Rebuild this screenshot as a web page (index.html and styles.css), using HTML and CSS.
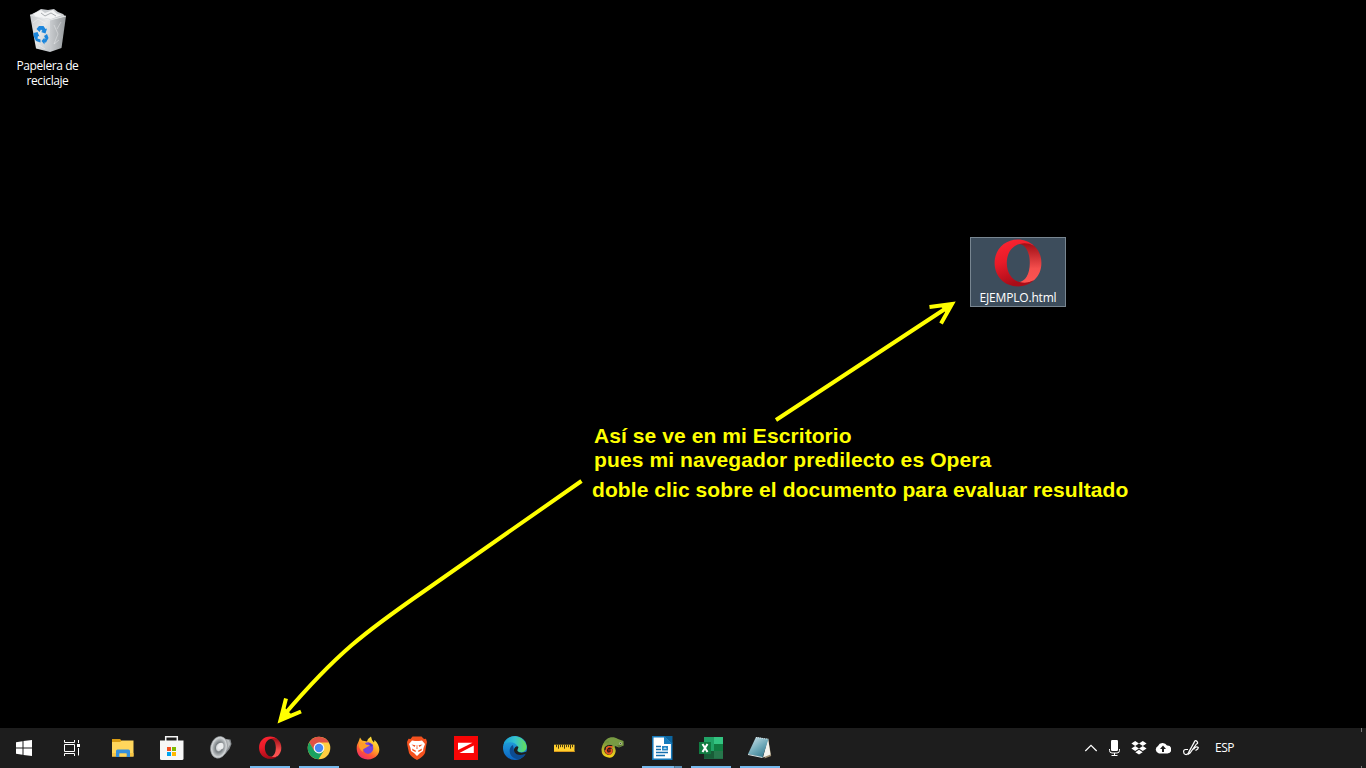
FILE: index.html
```html
<!DOCTYPE html>
<html lang="es">
<head>
<meta charset="utf-8">
<title>Escritorio</title>
<link rel="stylesheet" href="styles.css">
</head>
<body>
<main class="desktop">
  <div class="shortcut recycle">
    <svg class="recycle-icon" viewBox="0 0 48 48">
      <defs>
        <linearGradient id="binL" x1="0" y1="0" x2="1" y2="1"><stop offset="0" stop-color="#c6c9cc"/><stop offset=".5" stop-color="#e6e8e9"/><stop offset="1" stop-color="#bfc3c7"/></linearGradient>
        <linearGradient id="binR" x1="0" y1="0" x2="1" y2="0"><stop offset="0" stop-color="#c9cccf"/><stop offset="1" stop-color="#969a9d"/></linearGradient>
      </defs>
      <path d="M6 10 12 7 17 4 24 5 30 4 34 7 39 9 42 12 25 17Z" fill="#c9cccf"/>
      <path d="M9 9 17 5 21 8 29 5 33 9 38 10 27 14 12 12Z" fill="#f3f4f5"/>
      <path d="M17 8 21 11 27 8 32 11" fill="none" stroke="#a9adb0"/>
      <path d="M6 10 26 15 26 47 12 43.500Z" fill="url(#binL)"/>
      <path d="M26 15 42 11 37.500 43 26 47Z" fill="url(#binR)"/>
      <path d="M6 10 26 15 42 11" fill="none" stroke="#eef0f1" stroke-width=".8"/>
      <path d="M30 20 34 29 30 39 35 35M37 17 33 24M9 18l5-4 7 4M15 40l6 4" fill="none" stroke="#fff" opacity=".35"/>
      <g fill="#1b86dc"><path d="M12.500 24 15 21 19.500 21 21.500 24 23 23.500 21.500 28.500 17 27 18.500 26 17 24.500 15.500 27Z"/><path d="M9.500 28 13.500 27 15.500 31.500 14 31 13.500 33.500 16.500 34.500V37.500L12 36 9.800 31.500Z"/><path d="M20 31 23 29 24.500 33 22 37.500H20.500V39.500L17.500 36 20.500 32.500V34.500L21.500 33.500Z"/></g>
    </svg>
    <span class="label">Papelera de<br>reciclaje</span>
  </div>

  <div class="shortcut example">
    <svg class="opera-large" viewBox="0 0 24 24">
      <defs>
        <linearGradient id="opA" x1="0" y1="0" x2="0.3" y2="1"><stop offset="0" stop-color="#ff2633"/><stop offset=".5" stop-color="#e91b28"/><stop offset="1" stop-color="#a90c18"/></linearGradient>
        <linearGradient id="opB" x1="0" y1="0" x2="0" y2="1"><stop offset="0" stop-color="#990b12"/><stop offset=".25" stop-color="#bd2328"/><stop offset=".65" stop-color="#f64f4d"/><stop offset="1" stop-color="#ff5452"/></linearGradient>
      </defs>
      <path fill="url(#opB)" d="M9 3.500Q12 .8 16 1.300L20 3.400C22.400 5.500 23.700 8.500 23.700 12S22.400 18.500 20 20.600Q14 24 9 20.500 10.500 21.500 12.200 21.500C15.600 21.500 17.900 17.600 17.900 12S15.600 2.500 12.200 2.500Q10.500 2.500 9 3.500Z"/>
      <path fill="url(#opA)" d="M12 .3C5.200.3.300 5.400.300 12S5.200 23.700 12 23.700C15 23.700 17.900 22.500 20 20.600Q16.500 22.500 12.800 21.500C9 20.600 6.400 17 6.400 12S9 3.400 12.800 2.500Q16.500 1.500 20 3.400C17.900 1.500 15 .3 12 .3Z"/>
    </svg>
    <span class="label">EJEMPLO.html</span>
  </div>

  <svg class="arrows" viewBox="0 0 1366 768">
    <path d="M776 420 948 307M929.500 307 952 304 941 323.500"/>
    <path d="M581.500 481 425 590.500C365 632 337 653 284 715M286 698.500 280.500 720 301 711.500"/>
    <path class="tip" d="M955 302 940 305 946 313ZM278 723 291 714 284 707Z"/>
  </svg>

  <p class="note note-a">Así se ve en mi Escritorio</p>
  <p class="note note-b">pues mi navegador predilecto es Opera</p>
  <p class="note note-c">doble clic sobre el documento para evaluar resultado</p>
</main>

<footer class="taskbar">
  <div class="system">
    <svg viewBox="0 0 16 16"><path fill="#fff" d="M0 2.300 6.500 1.300V7.500H0ZM7.500 1.100 16 0V7.500H7.500ZM0 8.500H6.500V14.700L0 13.700ZM7.500 8.500H16V16L7.500 14.900Z"/></svg>
    <svg viewBox="0 0 16 16"><path fill="none" stroke="#fff" d="M.5 0V2.500H10.500V0M.5 4.500H10.500V11.500H.5ZM.5 16V13.500H10.500V16M14.500 0V3M14.500 8V15.500"/><path fill="#fff" d="M13 4h3v3h-3z"/></svg>
  </div>
  <nav class="apps">
    <div class="app"><svg viewBox="0 0 24 24">
      <path fill="#d99c13" d="M1 3H9L11 5V8H1Z"/><path fill="#ffd65c" d="M1 6H9L11 4.500H22.500V20.500H1Z"/><path fill="#f7c545" d="M1 17h21.500v3.500H1Z"/>
      <path fill="#3590dc" d="M5 21V15Q5 13.500 6.500 13.500H17.500Q19 13.500 19 15V21H15.500V17.500H8.500V21Z"/><path fill="#ffd65c" d="M8.500 17.500h7v3h-7z"/></svg></div>
    <div class="app"><svg viewBox="0 0 24 24">
      <path fill="none" stroke="#f5f5f5" stroke-width="1.500" d="M5.700 5V.8H17.300V5"/><path fill="#f7f7f7" d="M0 4.500H23.500V22.500Q23.500 24 22 24H1.500Q0 24 0 22.500Z"/>
      <path fill="#f25022" d="M7 11h4v4H7z"/><path fill="#7fba00" d="M12 11h4v4h-4z"/><path fill="#00a4ef" d="M7 16h4v4H7z"/><path fill="#ffb900" d="M12 16h4v4h-4z"/></svg></div>
    <div class="app"><svg viewBox="0 0 24 24">
      <defs><radialGradient id="cone"><stop stop-color="#f4f5f6"/><stop offset=".35" stop-color="#d7dadc"/><stop offset=".5" stop-color="#777d81"/><stop offset="1" stop-color="#c4c8ca"/></radialGradient></defs>
      <path fill="#85898c" d="M11 .5 17 3 21.500 3.500 22.500 8 20.500 13 17 17 10 22Z"/><path fill="#b9bdbf" d="M17 3.500l3 .5 1.500 4-3.500 6Z"/>
      <ellipse cx="10" cy="11.300" rx="8.300" ry="11" transform="rotate(14 10 11.300)" fill="#d0d3d5" stroke="#8d9295" stroke-width=".6"/>
      <ellipse cx="10" cy="11.300" rx="6.800" ry="9.300" transform="rotate(14 10 11.300)" fill="url(#cone)"/>
      <ellipse cx="12" cy="10" rx="2.600" ry="3.300" fill="#eceeef"/></svg></div>
    <div class="app active"><svg viewBox="-.8 -.3 25.200 25.200">
      <path fill="url(#opB)" d="M9 3.500Q12 .8 16 1.300L20 3.400C22.400 5.500 23.700 8.500 23.700 12S22.400 18.500 20 20.600Q14 24 9 20.500 10.500 21.500 12.200 21.500C15.600 21.500 17.900 17.600 17.900 12S15.600 2.500 12.200 2.500Q10.500 2.500 9 3.500Z"/>
      <path fill="url(#opA)" d="M12 .3C5.200.3.300 5.400.300 12S5.200 23.700 12 23.700C15 23.700 17.900 22.500 20 20.600Q16.500 22.500 12.800 21.500C9 20.600 6.400 17 6.400 12S9 3.400 12.800 2.500Q16.500 1.500 20 3.400C17.900 1.500 15 .3 12 .3Z"/></svg></div>
    <div class="app active"><svg viewBox="0 0 24 24">
      <circle cx="12" cy="12" r="11.300" fill="#ffcd40"/><path fill="#df5144" d="M2.300 6.200A11.300 11.300 0 0 1 21.800 6.400H12L7 15Z"/><path fill="#1aa260" d="M2.300 6.200A11.300 11.300 0 0 0 11.500 23.300L16.800 14.800 12 17 7.200 14.700Z"/><circle cx="12" cy="12" r="5.400" fill="#f4f6f5"/><circle cx="12" cy="12" r="4.200" fill="#4687f4"/></svg></div>
    <div class="app"><svg viewBox="0 0 24 24">
      <defs><linearGradient id="fox" x1=".8" y1="0" x2=".2" y2="1"><stop stop-color="#fff344"/><stop offset=".4" stop-color="#ffae27"/><stop offset=".7" stop-color="#ff5634"/><stop offset="1" stop-color="#ee2474"/></linearGradient></defs>
      <path fill="url(#fox)" d="M1 9 3 4.500 4 1.500 6 4.500 11 5.500 12 3 15 .5 16 4 18 6.500 18.500 4C24 9 24.500 15 21.500 19 16.500 25.500 5 24.500 2 18 .500 14.500 .5 12 1 9Z"/>
      <path fill="#7544dd" d="M9 7Q14 5 17 9 18.500 17 12 18 7 17 7 12L11 11Z"/><path fill="#ff9c29" d="M3 7.500Q8 6 10 8.500L14 9.500 11 11 8.500 12.500Q6 13 7 16 2 13 3 7.500Z"/><path fill="#4e36c1" d="M12 6.500 17 9 15 11Z"/></svg></div>
    <div class="app"><svg viewBox="0 0 24 24">
      <path fill="#f4511e" d="M7.500.5H16.500L19 3 21 2.700 22 6 21.300 9 20 17Q18 21 12 24 6 21 4 17L2.300 9 2 6 3.500 2.700 5.500 3Z"/>
      <path fill="#fff" d="M7 4.500 10 5H14L17 4.500 20 8 18.500 12 18 15 15 17 12 20 9 17 6 15 5.500 12 4 8Z"/>
      <path fill="#f4511e" d="M6.500 8.500 10.500 9.300 9.500 11ZM17.500 8.500 13.500 9.300 14.500 11ZM7 12.500 11 14.800 10.500 16 7.500 14.500ZM17 12.500 13 14.800 13.500 16 16.500 14.500ZM11.700 9h.6l.2 4h-1Z"/></svg></div>
    <div class="app"><svg viewBox="0 0 24 24"><path fill="#f80505" d="M0 0h24v24H0z"/><path fill="#fff" d="M4 6.800H18.500L4 14ZM19.800 9.500V17H5.400Z"/></svg></div>
    <div class="app"><svg viewBox="0 0 24 24">
      <defs><linearGradient id="edgeTop"><stop stop-color="#189fd5"/><stop offset=".5" stop-color="#35c3d0"/><stop offset="1" stop-color="#65df54"/></linearGradient><linearGradient id="edgeSide" x1="0" y1="0" x2="0" y2="1"><stop stop-color="#27afe0"/><stop offset="1" stop-color="#0b63c2"/></linearGradient></defs>
      <circle cx="12" cy="12" r="12" fill="url(#edgeSide)"/><path fill="#0c4b91" d="M10 9C4 12 6 23 16 23.300Q20 22 22.700 18 14 21 11 15Z"/>
      <path fill="url(#edgeTop)" d="M.5 9C2-1 17-3 22.500 7 26 14 20 17.500 15 16 13 15.300 15.500 13.500 15 11 13 5 4 5 .5 9Z"/><path fill="#1e1e1e" d="M11 13Q13 9 15.500 11 14 14 14.500 15 17 18 24 15.600L22.700 18Q13 21 11 15Z"/></svg></div>
    <div class="app"><svg viewBox="0 0 24 24"><path fill="#ffcf2e" d="M2 8.700H22.500V16H2Z"/><path fill="#d9981c" d="M2 15h20.500v1H2z"/><path stroke="#493b13" d="M4.500 8.700v2.500M6.500 8.700v4M8.500 8.700v2.500M10.500 8.700v2.500M12.500 8.700v4M14.500 8.700v2.500M16.500 8.700v2.500M18.500 8.700v4M20.500 8.700v2.500"/></svg></div>
    <div class="app"><svg viewBox="0 0 24 24">
      <defs><linearGradient id="tail" x1="0" y1="0" x2="0" y2="1"><stop stop-color="#71923b"/><stop offset=".5" stop-color="#b9b52c"/><stop offset="1" stop-color="#f2cf17"/></linearGradient></defs>
      <path fill="#789b43" d="M2 9C4 1 12-.5 17 3L22.500 5 22.700 9.500 18 11.500 14 10 13.300 13 11 9 5 11Z"/>
      <path fill="none" stroke="url(#tail)" stroke-width="2.800" d="M8 6C1 7-.5 18 6.500 20 12.500 21.500 15.500 14 11 10.500"/>
      <path fill="none" stroke="#e95720" stroke-width="2" d="M11.500 11.500C6.500 8.500 3 14 6 17 9.500 19 12.500 15 9.500 13"/><path fill="none" stroke="#1b1614" d="M10.500 9.500Q4 8.500 4 14"/><path fill="#841811" d="M7 13h2.500v2.500H7z"/>
      <path fill="#596d33" d="M16 9.500l6-.5-4 2z"/><circle cx="19.500" cy="7.500" r="1.300" fill="#b4c19b"/><circle cx="19.500" cy="7.500" r=".6" fill="#333"/></svg></div>
    <div class="app active grouped"><svg viewBox="0 0 24 24"><path fill="#fff" stroke="#1578b9" stroke-width="1.500" d="M2.800.8H15.500L21.700 7V23.300H2.800Z"/><path fill="#0b659f" d="M14 0H22.500V8Z"/><path fill="#157bbd" d="M14 0v8h8Z"/><path stroke="#176fae" stroke-width="1.300" d="M6 10.500h5M6 13.500h5M6 16.500h12M6 19.500h9"/><path fill="#2786c4" d="M12 10h6v4.500h-6z"/><path fill="#a8d8f2" d="M13 13l2-2 2 2z"/></svg></div>
    <div class="app active"><svg viewBox="0 0 24 24"><path fill="#21a366" d="M5 1h19v21.600H5z"/><path fill="#33c481" d="M15 1h9v7h-9z"/><path fill="#107c41" d="M15 8h9v7h-9z"/><path fill="#185c37" d="M5 15h19v7.600H5z"/><path fill="#27774c" d="M15 15h9v7.600h-9z"/><path fill="#107c41" d="M0 6h12v12H0z"/><path stroke="#fff" stroke-width="2" d="M3.500 8 8.500 16M8.500 8 3.500 16"/></svg></div>
    <div class="app active"><svg viewBox="0 0 24 24">
      <defs><linearGradient id="pad" x1="0" y1="0" x2=".7" y2="1"><stop stop-color="#d7e8ee"/><stop offset=".6" stop-color="#6fa9b8"/><stop offset="1" stop-color="#377b90"/></linearGradient></defs>
      <path fill="#9d8e71" d="M20 2 23.200 20 16.500 22.500Z"/><path fill="#f3f3ed" d="M20 2 22.500 18.500 15 21.500Z"/><path fill="url(#pad)" d="M8 1 20.500 3 14.500 21.500 0 18Z"/><path fill="#d9e5e8" d="M0 18 14.500 21V22L0 19Z"/><path fill="none" stroke="#d4e1e5" stroke-dasharray="1 1" d="M8 1.500 20 3.200"/></svg></div>
  </nav>
  <div class="tray">
    <svg viewBox="0 0 16 16"><path fill="none" stroke="#fff" stroke-width="1.200" d="M2.300 11 8 5.300 13.700 11"/></svg>
    <svg viewBox="0 0 16 16"><rect x="4" y="0" width="7" height="11" rx="1.200" fill="#fff"/><path fill="none" stroke="#fff" d="M2.500 9v1.500Q2.500 13 5 13h5q2.500 0 2.500-2.500V9M7.500 13v2.500M4.500 15.500h6"/></svg>
    <svg viewBox="0 0 16 16"><path fill="#fff" d="M4.200 1 8 3.500 4.200 6 .4 3.500ZM11.800 1l3.800 2.500L11.800 6 8 3.500ZM4.200 6 8 8.500 4.200 11 .4 8.500ZM11.800 6l3.800 2.500-3.800 2.500L8 8.500ZM8 9.800l3.700 2.400L8 14.500l-3.700-2.300Z"/></svg>
    <svg viewBox="0 0 16 16"><path fill="#fff" d="M4 13.500A4 4 0 0 1 3 6 5 5 0 0 1 12 5.500 4 4 0 0 1 12.500 13.500Z"/><path fill="#1d1d1d" d="M8 5.500 11 9H9v3H7V9H5Z"/></svg>
    <svg class="pen" viewBox="0 0 16 16"><path fill="none" stroke="#fff" stroke-width="1.200" d="M5 9.500H2.500Q.6 9.500.6 11.700T2.500 14.500Q5 15 6 12L11.500 1.500Q12.500-.3 14 1.500T13.500 4L7 13 5.500 14 6 11.500 11.500 2M10.500 9.500Q13 5.500 15.300 7.500 15.500 9 12.500 10.500"/></svg>
    <span class="lang">ESP</span>
    <i class="peek"></i>
  </div>
</footer>
</body>
</html>
```
FILE: styles.css
```css
* { box-sizing: border-box; }
body { margin: 0; width: 1366px; height: 768px; overflow: hidden; background: #000; color: #fff; display: flex; flex-direction: column; font-family: "Open Sans", "Noto Sans", sans-serif; }
svg { display: block; flex: none; }

.desktop { position: relative; flex: 1; }
.shortcut { position: absolute; display: flex; flex-direction: column; align-items: center; text-align: center; }
.label { font-size: 12px; line-height: 15px; letter-spacing: -.42px; white-space: nowrap; }
.recycle { left: 0; top: 5px; width: 95px; }
.recycle-icon { width: 48px; height: 48px; margin-bottom: 5px; }
.example { left: 970px; top: 237px; width: 96px; height: 70px; padding-top: 1px; background: #3d4d5c; border: 1px solid #788691; }
.example .label { letter-spacing: -.18px; }
.opera-large { width: 48px; height: 48px; margin-bottom: 3px; }

.arrows { position: absolute; left: 0; top: 0; width: 1366px; height: 768px; fill: none; stroke: #ff0; stroke-width: 4; pointer-events: none; }
.tip { fill: #ff0; stroke: none; }

.note { position: absolute; margin: 0; color: #ff0; font: bold 21px/24px "Liberation Sans", Arial, sans-serif; letter-spacing: .08px; white-space: nowrap; }
.note-a { left: 594px; top: 424px; }
.note-b { left: 594px; top: 448px; letter-spacing: .11px; }
.note-c { left: 592px; top: 478px; }

.taskbar { position: relative; height: 40px; display: flex; background: #1d1d1d; }
.system { width: 103px; padding-left: 16px; display: flex; align-items: center; gap: 32px; }
.system svg { width: 16px; height: 16px; }
.apps { display: flex; gap: 9px; }
.app { width: 40px; height: 40px; padding: 8px 8px 6px; border-bottom: 2px solid transparent; }
.app svg { width: 24px; height: 24px; }
.active { border-bottom-color: #76b9ed; }
.grouped { border-image: linear-gradient(90deg, #76b9ed 31px, #4f7692 31px, #4f7692 32px, #5b8eb5 32px) 2; border-width: 0 0 2px; border-style: solid; }
.tray { flex: 1; margin-left: 303px; display: flex; align-items: center; gap: 8px; }
.tray svg { width: 16px; height: 16px; }
.tray .pen { margin-left: 4px; }
.lang { margin-left: 8px; font-size: 12px; line-height: 16px; letter-spacing: -.5px; }
.peek { align-self: stretch; width: 1px; margin-left: auto; margin-right: 4px; background: linear-gradient(#777 4px, transparent 4px 38px, #777 38px); }
```
